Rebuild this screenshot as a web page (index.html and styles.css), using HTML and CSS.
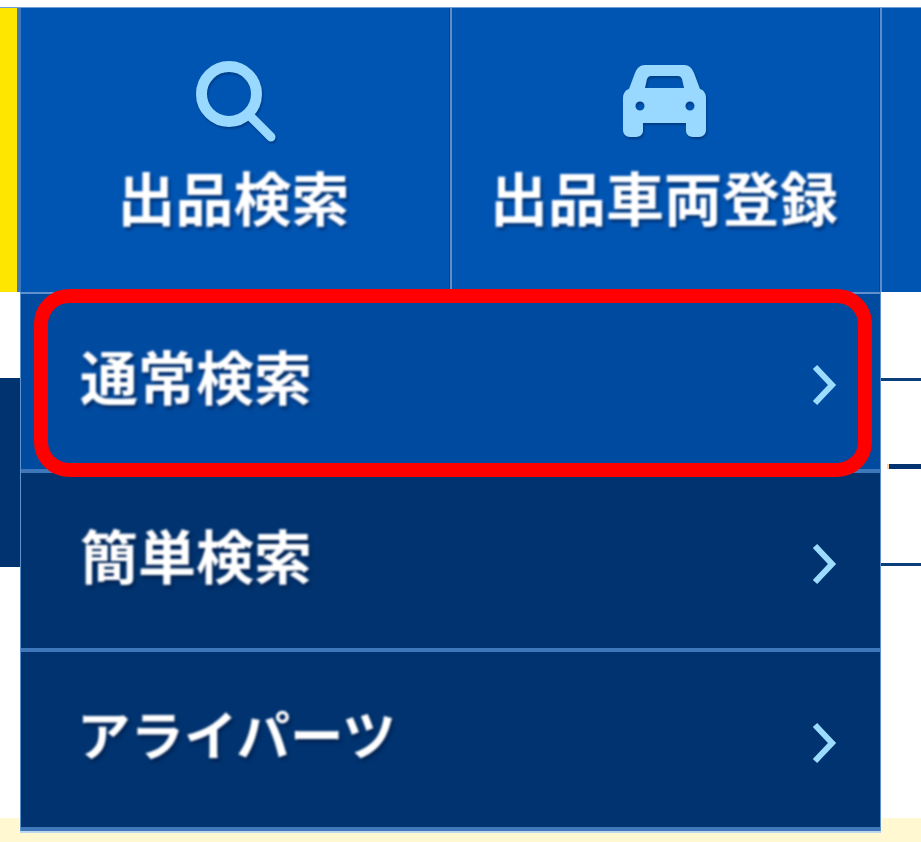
FILE: index.html
```html
<!DOCTYPE html>
<html lang="ja">

<head>
    <title>出品検索</title>
    <meta charset="utf-8">
    <meta name="viewport" content="width=device-width, initial-scale=1.0">
    <link rel="stylesheet" href="styles.css">
</head>

<body>

    <div class="page">

        <header class="nav">
            <div class="nav-mark"></div>
            <a class="tab">
                <span class="tab-icon">
                    <svg class="icon-search" width="82" height="82" viewBox="0 0 82 82" fill="none" stroke="#99d8ff">
                        <circle cx="34" cy="34" r="27.5" stroke-width="11" />
                        <path d="M54 55 L76 77" stroke-width="9" stroke-linecap="round" />
                    </svg>
                </span>
                <span class="tab-label">出品検索</span>
            </a>
            <a class="tab">
                <span class="tab-icon">
                    <svg width="83" height="72" viewBox="0 0 83 72">
                        <path fill="#99d8ff" fill-rule="evenodd" d="M22 0 H61 C66 0 69 3 71 8 L77 24 C81 25 83 29 83 33 V65 C83 69 80 72 76 72 H70 C66 72 63 69 63 66 V58 H20 V66 C20 69 17 72 13 72 H7 C3 72 0 69 0 65 V33 C0 29 2 25 6 24 L12 8 C14 3 17 0 22 0 Z M28 11 H55 C57 11 58 12 59 14 L61 23 H22 L24 14 C25 12 26 11 28 11 Z M17 36.500 A4.500 4.500 0 1 0 17 45.500 A4.500 4.500 0 1 0 17 36.500 Z M67 36.500 A4.500 4.500 0 1 0 67 45.500 A4.500 4.500 0 1 0 67 36.500 Z" />
                    </svg>
                </span>
                <span class="tab-label">出品車両登録</span>
            </a>
            <a class="tab tab-cut"></a>
        </header>

        <main class="content">
            <div class="side-band"></div>
            <div class="table-lines">
                <div class="line line-first"></div>
                <div class="line line-thick"></div>
                <div class="line line-last"></div>
            </div>
        </main>

        <footer class="foot"></footer>

        <nav class="menu">
            <a class="menu-item active">
                <span class="menu-label">通常検索</span>
                <svg class="chevron" width="26" height="42" viewBox="0 0 26 42" fill="none" stroke="#9bdcff" stroke-width="6">
                    <path d="M4 3 L21 21 L4 39" />
                </svg>
            </a>
            <a class="menu-item">
                <span class="menu-label">簡単検索</span>
                <svg class="chevron" width="26" height="42" viewBox="0 0 26 42" fill="none" stroke="#9bdcff" stroke-width="6">
                    <path d="M4 3 L21 21 L4 39" />
                </svg>
            </a>
            <a class="menu-item">
                <span class="menu-label kana">アライパーツ</span>
                <svg class="chevron" width="26" height="42" viewBox="0 0 26 42" fill="none" stroke="#9bdcff" stroke-width="6">
                    <path d="M4 3 L21 21 L4 39" />
                </svg>
            </a>
        </nav>

        <div class="highlight"></div>

    </div>

</body>

</html>
```

FILE: styles.css
```css
* {
    box-sizing: border-box;
}

body {
    margin: 0;
    background: white;
    font-family: "Noto Sans CJK JP", "Liberation Sans", sans-serif;
}

.page {
    position: relative;
    width: 921px;
    height: 842px;
    overflow: hidden;
    display: flex;
    flex-direction: column;
}

.nav {
    display: flex;
    height: 285px;
    margin-top: 7px;
    background: #0055b3;
    border-top: 1px solid #6f9bd0;
}

.nav-mark {
    width: 17px;
    background: #ffe600;
}

.tab {
    width: 430px;
    display: flex;
    flex-direction: column;
    align-items: center;
    padding: 52px 4px 0 0;
    border-left: 2px solid #5f8fc8;
    box-shadow: -1px 0 0 #0a3f80;
}

.tab:first-of-type {
    width: 433px;
    border-left: 4px solid #3f78ba;
    box-shadow: none;
}

.tab-cut {
    flex: 1;
}

.tab-icon {
    height: 82px;
    display: flex;
    align-items: center;
    filter: drop-shadow(1px 2px 1px rgba(0, 30, 80, 0.45)) blur(0.5px);
}

.icon-search {
    margin-left: 5px;
}

.tab-label {
    margin-top: 19px;
    font-size: 58px;
    line-height: 70px;
    font-weight: 700;
    color: white;
    white-space: nowrap;
    text-shadow: 2px 3px 3px rgba(0, 25, 70, 0.6);
    filter: blur(0.8px);
}

.content {
    flex: 1;
    display: flex;
    justify-content: space-between;
}

.side-band {
    width: 21px;
    height: 189px;
    margin-top: 86px;
    background: #00336f;
}

.table-lines {
    width: 41px;
    padding-top: 86px;
}

.line {
    height: 3px;
    background: #0b3f7c;
}

.line-thick {
    height: 5px;
    margin: 83px 0 0 7px;
    background: #00336f;
    border-left: 2px solid #ffcf9f;
}

.line-last {
    margin-top: 94px;
}

.foot {
    height: 24px;
    background: #fff8d0;
}

.menu {
    position: absolute;
    top: 292px;
    left: 20px;
    width: 861px;
    border-left: 1px solid #5f91cc;
    border-right: 1px solid #5f91cc;
    border-top: 2px solid #5f91cc;
    box-shadow: 0 2px 0 #bcd6ec;
}

.menu-item {
    display: flex;
    align-items: center;
    justify-content: space-between;
    height: 179px;
    padding: 0 43px 0 59px;
    background: #00336f;
    border-bottom: 4px solid #3f78ba;
}

.menu-item.active {
    background: #004a9f;
}

.menu-label {
    margin-top: -14px;
    font-size: 58px;
    line-height: 70px;
    font-weight: 700;
    color: white;
    text-shadow: 2px 3px 3px rgba(0, 20, 60, 0.6);
    filter: blur(0.8px);
}

.menu-label.kana {
    margin-left: -3px;
    font-size: 53.5px;
}

.chevron {
    flex: none;
    margin-top: 6px;
    filter: blur(0.5px);
}

.highlight {
    position: absolute;
    top: 289px;
    left: 34px;
    width: 838px;
    height: 188px;
    border: 14px solid #ff0000;
    border-radius: 35px;
}
```
